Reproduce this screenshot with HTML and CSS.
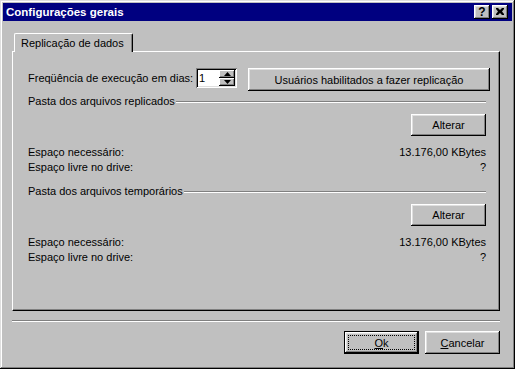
FILE: index.html
```html
<!DOCTYPE html>
<html lang="pt">
<head>
    <meta charset="UTF-8">
    <title>Configurações gerais</title>
    <link rel="stylesheet" href="styles.css">
</head>
<body>
    <div class="window">
        <div class="titlebar">
            <span class="title">Configurações gerais</span>
            <div class="title-buttons">
                <button class="tbtn help">?</button>
                <button class="tbtn close">
                    <svg width="8" height="7" viewBox="0 0 8 7"><path d="M0 0h2l2 2 2-2h2v1l-2 2.5 2 2.5v1h-2l-2-2-2 2h-2v-1l2-2.5-2-2.5z" fill="#000"/></svg>
                </button>
            </div>
        </div>

        <div class="client">
            <div class="tabs">
                <div class="tab">Replicação de dados</div>
            </div>
            <div class="panel">
                <div class="freq-row">
                    <label class="freq-label">Freqüência de execução em dias:</label>
                    <div class="spin">
                        <span class="spin-value">1</span>
                        <div class="spin-buttons">
                            <span class="spin-btn"><svg width="7" height="4" viewBox="0 0 7 4"><path d="M3.5 0 7 4H0z"/></svg></span>
                            <span class="spin-btn"><svg width="7" height="4" viewBox="0 0 7 4"><path d="M0 0h7L3.5 4z"/></svg></span>
                        </div>
                    </div>
                    <button class="btn users-btn">Usuários habilitados a fazer replicação</button>
                </div>

                <div class="group">
                    <div class="group-title"><span>Pasta dos arquivos replicados</span><span class="etch"></span></div>
                    <div class="group-actions"><button class="btn">Alterar</button></div>
                    <div class="info-row"><span>Espaço necessário:</span><span>13.176,00 KBytes</span></div>
                    <div class="info-row"><span>Espaço livre no drive:</span><span>?</span></div>
                </div>

                <div class="group">
                    <div class="group-title"><span>Pasta dos arquivos temporários</span><span class="etch"></span></div>
                    <div class="group-actions"><button class="btn">Alterar</button></div>
                    <div class="info-row"><span>Espaço necessário:</span><span>13.176,00 KBytes</span></div>
                    <div class="info-row"><span>Espaço livre no drive:</span><span>?</span></div>
                </div>
            </div>

            <div class="separator"></div>

            <div class="dialog-buttons">
                <button class="btn default"><span class="focus"><u>O</u>k</span></button>
                <button class="btn"><u>C</u>ancelar</button>
            </div>
        </div>
    </div>
</body>
</html>
```

FILE: styles.css
```css
body {
    margin: 0;
    background-color: #c0c0c0;
    font-family: 'Liberation Sans', Arial, sans-serif;
    font-size: 11px;
    color: #000;
}
.window {
    width: 515px;
    height: 369px;
    box-sizing: border-box;
    padding: 3px;
    background-color: #c0c0c0;
    box-shadow: inset -1px -1px #000, inset 1px 1px #dfdfdf, inset -2px -2px #808080, inset 2px 2px #fff;
    display: flex;
    flex-direction: column;
}
.titlebar {
    height: 18px;
    background-color: #000080;
    color: #fff;
    display: flex;
    align-items: center;
    justify-content: space-between;
    padding: 0 4px 0 3px;
}
.title {
    font-weight: bold;
    font-size: 11.5px;
}
.title-buttons {
    display: flex;
    gap: 2px;
}
.tbtn {
    width: 16px;
    height: 14px;
    padding: 0;
    border: none;
    background-color: #c0c0c0;
    box-shadow: inset -1px -1px #000, inset 1px 1px #fff, inset -2px -2px #808080, inset 2px 2px #dfdfdf;
    display: flex;
    align-items: center;
    justify-content: center;
    font-family: 'Liberation Sans', Arial, sans-serif;
    font-weight: bold;
    font-size: 12px;
    line-height: 12px;
    color: #000;
}
.tbtn svg {
    display: block;
    margin-top: -1px;
}
.client {
    flex: 1;
    padding: 12px 12px 0 9px;
    display: flex;
    flex-direction: column;
}
.tabs {
    display: flex;
    padding-left: 2px;
}
.tab {
    position: relative;
    z-index: 1;
    height: 19px;
    box-sizing: border-box;
    padding: 3px 8px 0 6px;
    margin-bottom: -1px;
    background-color: #c0c0c0;
    border-top: 1px solid #fff;
    border-left: 1px solid #fff;
    border-right: 1px solid #000;
    border-radius: 2px 2px 0 0;
    box-shadow: inset -1px 0 #808080;
    line-height: 13px;
}
.panel {
    height: 260px;
    box-sizing: border-box;
    padding: 16px 9px 0 15px;
    border-top: 1px solid #fff;
    border-left: 1px solid #fff;
    border-right: 1px solid #000;
    border-bottom: 1px solid #000;
    box-shadow: inset -1px -1px #808080;
}
.freq-row {
    display: flex;
    align-items: flex-start;
}
.freq-label {
    line-height: 20px;
    margin-right: 3px;
}
.spin {
    width: 41px;
    height: 20px;
    box-sizing: border-box;
    padding: 2px;
    background-color: #fff;
    box-shadow: inset 1px 1px #808080, inset -1px -1px #fff, inset 2px 2px #000, inset -2px -2px #dfdfdf;
    display: flex;
    justify-content: space-between;
}
.spin-value {
    padding-left: 1px;
    line-height: 16px;
}
.spin-buttons {
    display: flex;
    flex-direction: column;
}
.spin-btn {
    width: 16px;
    height: 8px;
    box-sizing: border-box;
    background-color: #c0c0c0;
    box-shadow: inset -1px -1px #000, inset 1px 1px #fff, inset -2px -2px #808080;
    display: flex;
    align-items: center;
    justify-content: center;
}
.spin-btn svg {
    display: block;
}
.btn {
    height: 23px;
    padding: 0;
    border: none;
    background-color: #c0c0c0;
    box-shadow: inset -1px -1px #000, inset 1px 1px #fff, inset -2px -2px #808080, inset 2px 2px #dfdfdf;
    font-family: 'Liberation Sans', Arial, sans-serif;
    font-size: 11px;
    color: #000;
}
.users-btn {
    width: 242px;
    margin-left: auto;
}
.group {
    margin-right: 4px;
}
.group-title {
    display: flex;
    align-items: center;
    line-height: 15px;
    margin-top: 3px;
}
.etch {
    flex: 1;
    height: 0;
    margin-left: 1px;
    border-top: 1px solid #808080;
    border-bottom: 1px solid #fff;
}
.group-actions {
    display: flex;
    justify-content: flex-end;
    margin: 5px 0 9px;
}
.group-actions .btn {
    width: 75px;
    height: 22px;
}
.info-row {
    display: flex;
    justify-content: space-between;
    line-height: 15px;
}
.group + .group .group-title {
    margin-top: 9px;
}
.separator {
    margin-top: 9px;
    border-top: 1px solid #808080;
    border-bottom: 1px solid #fff;
}
.dialog-buttons {
    display: flex;
    justify-content: flex-end;
    gap: 6px;
    margin-top: 9px;
}
.dialog-buttons .btn {
    width: 75px;
}
.btn.default {
    box-shadow: inset 0 0 0 1px #000, inset -2px -2px #000, inset 2px 2px #fff, inset -3px -3px #808080, inset 3px 3px #dfdfdf;
    padding: 4px;
}
.focus {
    display: flex;
    align-items: center;
    justify-content: center;
    height: 100%;
    box-sizing: border-box;
    border: 1px dotted #000;
}
u {
    text-decoration-thickness: 1px;
    text-underline-offset: 1px;
}
```
